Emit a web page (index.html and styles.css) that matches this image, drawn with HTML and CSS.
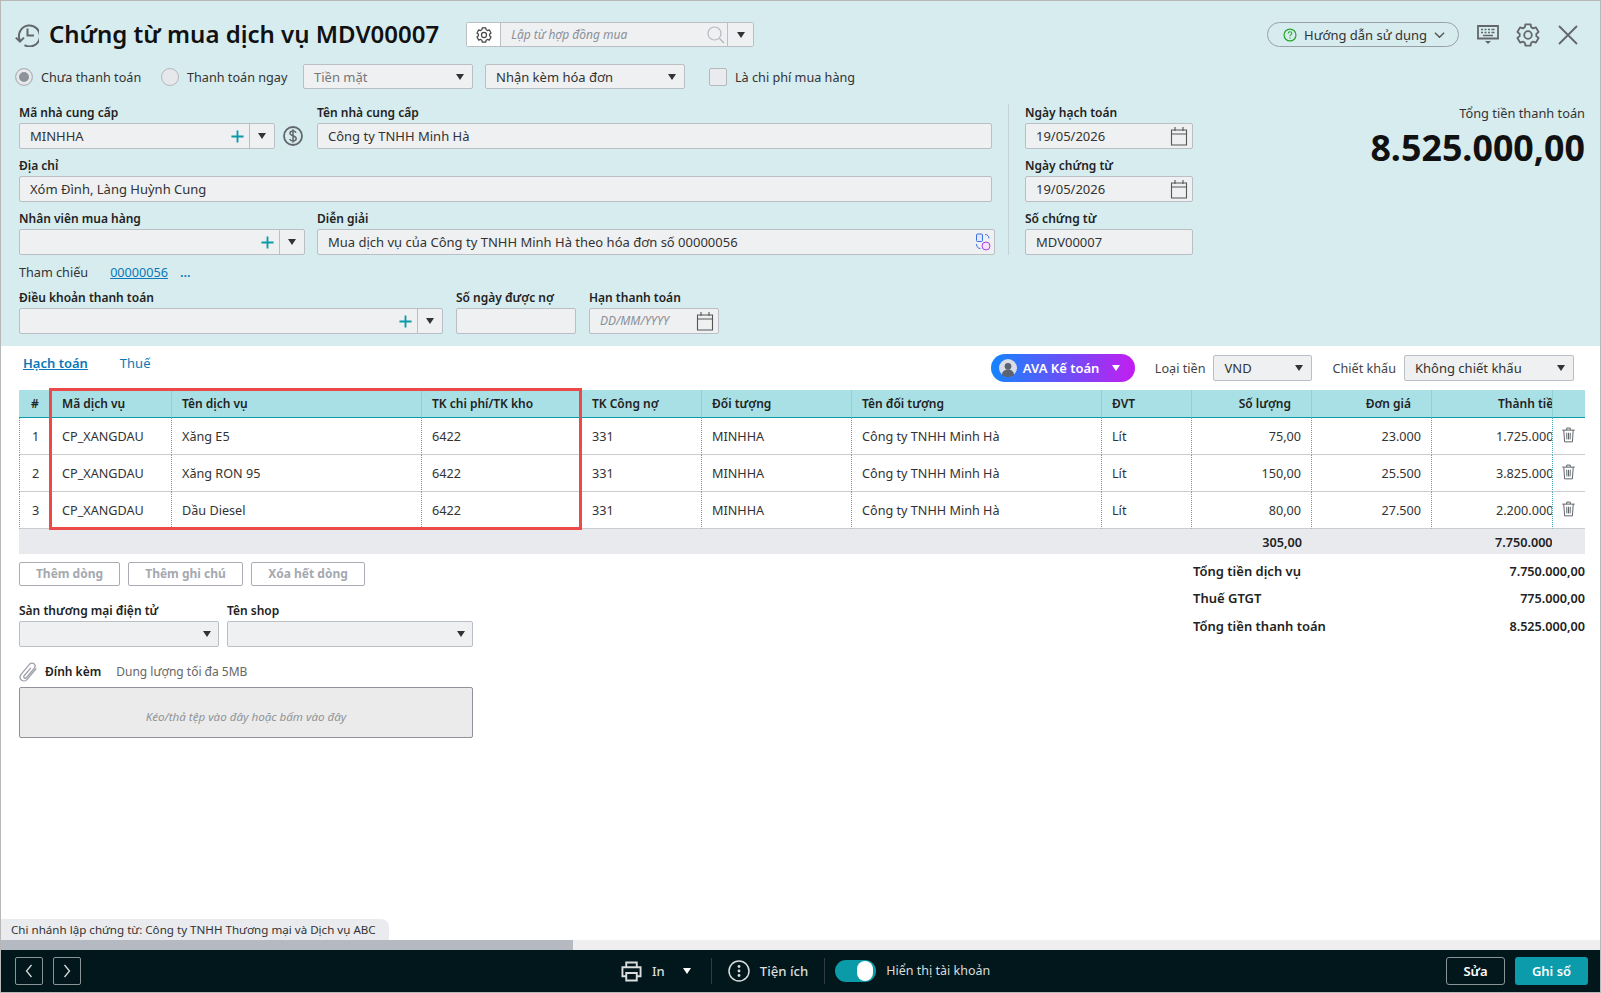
FILE: index.html
```html
<!DOCTYPE html>
<html lang="vi">
<head>
<meta charset="utf-8">
<title>Chứng từ mua dịch vụ MDV00007</title>
<link rel="stylesheet" href="styles.css">
</head>
<body>
<svg class="defs" width="0" height="0" aria-hidden="true">
  <symbol id="i-cal" viewBox="0 0 18 20"><path d="M1.5 4h15v15h-15zM1.5 8h15M5 1v4M13 1v4" fill="none" stroke="currentColor" stroke-width="1.1"/></symbol>
  <symbol id="i-plus" viewBox="0 0 14 14"><path d="M7 .5v13M.5 7h13" fill="none" stroke="currentColor" stroke-width="2"/></symbol>
  <symbol id="i-trash" viewBox="0 0 16 18"><path d="M1 3.5h14M6 3.5V1.2h4v2.3M2.7 3.5l.9 13.2h8.8l.9-13.2M6 6.5l.2 7.5M8 6.5V14M10 6.5 9.8 14" fill="none" stroke="currentColor" stroke-width="1.1"/></symbol>
  <symbol id="i-gear" viewBox="0 0 24 24"><polygon points="8.85,4.21 9.34,1.33 14.66,1.33 15.15,4.21 17.17,5.38 19.91,4.36 22.57,8.97 20.32,10.83 20.32,13.17 22.57,15.03 19.91,19.64 17.17,18.62 15.15,19.79 14.66,22.67 9.34,22.67 8.85,19.79 6.83,18.62 4.09,19.64 1.43,15.03 3.68,13.17 3.68,10.83 1.43,8.97 4.09,4.36 6.83,5.38" fill="none" stroke="currentColor" stroke-width="1.8" stroke-linejoin="round"/><circle cx="12" cy="12" r="3.8" fill="none" stroke="currentColor" stroke-width="1.8"/></symbol>
</svg>
<div class="app">
  <header class="head">
    <div class="title-row">
      <svg class="i-history" viewBox="0 0 24 24"><path d="M5 17.5A10.5 10.5 0 1 1 9.5 22.2" fill="none" stroke="currentColor" stroke-width="2"/><path d="M.8 14.6 5 18.6l4-4" fill="none" stroke="currentColor" stroke-width="2"/><path d="M12.5 5.5v7h6.5" fill="none" stroke="currentColor" stroke-width="2"/></svg>
      <h1 class="title">Chứng từ mua dịch vụ MDV00007</h1>
      <div class="combo">
        <span class="combo-gear"><svg class="i-16"><use href="#i-gear"/></svg></span>
        <span class="combo-input">Lập từ hợp đồng mua<svg class="i-search" viewBox="0 0 18 18"><circle cx="7.5" cy="7.5" r="6.5" fill="none" stroke="currentColor" stroke-width="1.2"/><path d="m12.5 12.5 4.5 4.5" stroke="currentColor" stroke-width="1.5"/></svg></span>
        <span class="combo-drop"><i class="caret"></i></span>
      </div>
      <div class="guide">
        <svg class="i-help" viewBox="0 0 16 16"><circle cx="8" cy="8" r="6.8" fill="none" stroke="currentColor" stroke-width="1.4"/><path d="M5.900 6.200C6 4.900 6.900 4.300 8 4.300c1.200 0 2.100.7 2.100 1.800 0 1.500-2.100 1.500-2.100 3.200" fill="none" stroke="currentColor" stroke-width="1.2"/><circle cx="8" cy="11.3" r=".8" fill="currentColor"/></svg>
        <span>Hướng dẫn sử dụng</span>
        <svg class="i-chev" viewBox="0 0 12 8"><path d="m1 1.5 5 5 5-5" fill="none" stroke="currentColor" stroke-width="1.5"/></svg>
      </div>
      <svg class="i-keyboard" viewBox="0 0 22 20"><path d="M1 1h20v12.5H1z" fill="none" stroke="currentColor" stroke-width="1.8"/><path d="M4 4.500h2M7.500 4.500h2M11 4.500h2M14.500 4.500h3M4 7.500h2M7.500 7.500h2M11 7.500h2M14.500 7.500h3M6 10.500h10" stroke="currentColor" stroke-width="1.3"/><path d="m8 16 3 3 3-3z" fill="currentColor"/></svg>
      <svg class="i-gear-lg"><use href="#i-gear"/></svg>
      <svg class="i-close" viewBox="0 0 20 20"><path d="m1 1 18 18M19 1 1 19" stroke="currentColor" stroke-width="1.8"/></svg>
    </div>

    <div class="options">
      <label class="radio radio-on"><i></i>Chưa thanh toán</label>
      <label class="radio"><i></i>Thanh toán ngay</label>
      <div class="box sel-cash muted">Tiền mặt<i class="caret caret-end"></i></div>
      <div class="box sel-inv">Nhận kèm hóa đơn<i class="caret caret-end"></i></div>
      <label class="check"><i></i>Là chi phí mua hàng</label>
    </div>

    <div class="form">
      <div class="form-main">
        <div class="row">
          <div class="field f-code">
            <div class="lbl">Mã nhà cung cấp</div>
            <div class="box pick">MINHHA<svg class="i-plus"><use href="#i-plus"/></svg><span class="pick-drop"><i class="caret"></i></span></div>
          </div>
          <svg class="i-dollar" viewBox="0 0 20 20"><circle cx="10" cy="10" r="9" fill="none" stroke="currentColor" stroke-width="1.8"/><path d="M13 6.800C12.500 5.600 11.300 5 10 5 8.300 5 7 5.900 7 7.300c0 3 6.200 2 6.200 5.300 0 1.500-1.400 2.400-3.200 2.400-1.500 0-2.800-.7-3.300-2M10 3.200v13.600" fill="none" stroke="currentColor" stroke-width="1.5"/></svg>
          <div class="field f-name">
            <div class="lbl">Tên nhà cung cấp</div>
            <div class="box">Công ty TNHH Minh Hà</div>
          </div>
        </div>
        <div class="field f-addr">
          <div class="lbl">Địa chỉ</div>
          <div class="box">Xóm Đình, Làng Huỳnh Cung</div>
        </div>
        <div class="row">
          <div class="field f-staff">
            <div class="lbl">Nhân viên mua hàng</div>
            <div class="box pick"><svg class="i-plus"><use href="#i-plus"/></svg><span class="pick-drop"><i class="caret"></i></span></div>
          </div>
          <div class="field f-desc">
            <div class="lbl">Diễn giải</div>
            <div class="box desc">Mua dịch vụ của Công ty TNHH Minh Hà theo hóa đơn số 00000056
              <svg class="i-ai" viewBox="0 0 16 18"><rect x="1.500" y="1" width="6" height="7.500" rx="1" fill="#dfe7fb" stroke="#3e6fe0"/><circle cx="11" cy="13" r="4" fill="#f3e4fc" stroke="#b03ce8"/><path d="M10 1.500c2.500 0 4 1.500 4 4M1.500 11c0 2.800 1.500 4.500 4 4.500" fill="none" stroke="#3e6fe0"/></svg>
            </div>
          </div>
        </div>
      </div>
      <div class="form-side">
        <div class="field">
          <div class="lbl">Ngày hạch toán</div>
          <div class="box date">19/05/2026<svg class="i-cal"><use href="#i-cal"/></svg></div>
        </div>
        <div class="field">
          <div class="lbl">Ngày chứng từ</div>
          <div class="box date">19/05/2026<svg class="i-cal"><use href="#i-cal"/></svg></div>
        </div>
        <div class="field">
          <div class="lbl">Số chứng từ</div>
          <div class="box">MDV00007</div>
        </div>
      </div>
      <div class="grand">
        <div class="grand-lbl">Tổng tiền thanh toán</div>
        <div class="grand-num">8.525.000,00</div>
      </div>
    </div>

    <div class="refs">
      <span>Tham chiếu</span>
      <a class="ref-link">00000056</a>
      <a class="ref-more">...</a>
    </div>

    <div class="row terms">
      <div class="field f-terms">
        <div class="lbl">Điều khoản thanh toán</div>
        <div class="box pick"><svg class="i-plus"><use href="#i-plus"/></svg><span class="pick-drop"><i class="caret"></i></span></div>
      </div>
      <div class="field f-days">
        <div class="lbl">Số ngày được nợ</div>
        <div class="box"></div>
      </div>
      <div class="field f-due">
        <div class="lbl">Hạn thanh toán</div>
        <div class="box date placeholder">DD/MM/YYYY<svg class="i-cal"><use href="#i-cal"/></svg></div>
      </div>
    </div>
  </header>

  <main class="body">
    <div class="toolbar">
      <a class="tab tab-on">Hạch toán</a>
      <a class="tab">Thuế</a>
      <div class="ava">
        <svg class="i-ava" viewBox="0 0 16 16"><circle cx="8" cy="8" r="8" fill="#d9dee6"/><circle cx="8" cy="6.500" r="3" fill="#5b6472"/><path d="M2.500 14c.6-3.300 2.800-4.600 5.500-4.600s4.900 1.300 5.500 4.600A8 8 0 0 1 2.500 14z" fill="#5b6472"/></svg>
        <span>AVA Kế toán</span>
        <i class="caret caret-w"></i>
      </div>
      <span class="tool-lbl">Loại tiền</span>
      <div class="box sel-cur">VND<i class="caret caret-end"></i></div>
      <span class="tool-lbl">Chiết khấu</span>
      <div class="box sel-disc">Không chiết khấu<i class="caret caret-end"></i></div>
    </div>

    <div class="grid-wrap">
      <table class="grid">
        <colgroup>
          <col class="c-no"><col class="c-code"><col class="c-name"><col class="c-acc"><col class="c-debt"><col class="c-obj"><col class="c-objn"><col class="c-unit"><col class="c-qty"><col class="c-price"><col class="c-amt"><col class="c-del">
        </colgroup>
        <thead>
          <tr>
            <th class="ctr">#</th><th>Mã dịch vụ</th><th>Tên dịch vụ</th><th>TK chi phí/TK kho</th><th>TK Công nợ</th><th>Đối tượng</th><th>Tên đối tượng</th><th>ĐVT</th><th class="num">Số lượng</th><th class="num">Đơn giá</th><th class="clip hd-amt"><span>Thành tiền</span></th><th></th>
          </tr>
        </thead>
        <tbody>
          <tr>
            <td class="ctr">1</td><td>CP_XANGDAU</td><td>Xăng E5</td><td>6422</td><td>331</td><td>MINHHA</td><td>Công ty TNHH Minh Hà</td><td>Lít</td><td class="num">75,00</td><td class="num">23.000</td><td class="clip"><span>1.725.000,00</span></td><td class="del"><svg class="i-trash"><use href="#i-trash"/></svg></td>
          </tr>
          <tr>
            <td class="ctr">2</td><td>CP_XANGDAU</td><td>Xăng RON 95</td><td>6422</td><td>331</td><td>MINHHA</td><td>Công ty TNHH Minh Hà</td><td>Lít</td><td class="num">150,00</td><td class="num">25.500</td><td class="clip"><span>3.825.000,00</span></td><td class="del"><svg class="i-trash"><use href="#i-trash"/></svg></td>
          </tr>
          <tr>
            <td class="ctr">3</td><td>CP_XANGDAU</td><td>Dầu Diesel</td><td>6422</td><td>331</td><td>MINHHA</td><td>Công ty TNHH Minh Hà</td><td>Lít</td><td class="num">80,00</td><td class="num">27.500</td><td class="clip"><span>2.200.000,00</span></td><td class="del"><svg class="i-trash"><use href="#i-trash"/></svg></td>
          </tr>
        </tbody>
        <tfoot>
          <tr>
            <td colspan="8"></td><td class="num">305,00</td><td></td><td class="clip"><span>7.750.000,00</span></td><td></td>
          </tr>
        </tfoot>
      </table>
      <div class="highlight"></div>
    </div>

    <div class="lower">
      <div class="lower-left">
        <div class="btns">
          <span class="btn">Thêm dòng</span>
          <span class="btn">Thêm ghi chú</span>
          <span class="btn">Xóa hết dòng</span>
        </div>
        <div class="row shop">
          <div class="field f-mall">
            <div class="lbl">Sàn thương mại điện tử</div>
            <div class="box"><i class="caret caret-end"></i></div>
          </div>
          <div class="field f-shop">
            <div class="lbl">Tên shop</div>
            <div class="box"><i class="caret caret-end"></i></div>
          </div>
        </div>
        <div class="attach">
          <svg class="i-clip" viewBox="1 1 15 17"><path d="M15.500 6.500 7.800 15.700c-1.400 1.600-3.600 1.700-4.900.6-1.400-1.200-1.500-3.300-.1-5l6.700-8C10.600 1.900 12.400 1.500 13.600 2.500c1.200 1 1.200 2.600.1 4l-6.400 7.700c-.6.700-1.500.8-2 .3s-.6-1.200.1-2L11 6" fill="none" stroke="currentColor" stroke-width="1.100"/></svg>
          <b>Đính kèm</b>
          <span>Dung lượng tối đa 5MB</span>
        </div>
        <div class="drop">Kéo/thả tệp vào đây hoặc bấm vào đây</div>
      </div>
      <dl class="totals">
        <div><dt>Tổng tiền dịch vụ</dt><dd>7.750.000,00</dd></div>
        <div><dt>Thuế GTGT</dt><dd>775.000,00</dd></div>
        <div><dt>Tổng tiền thanh toán</dt><dd>8.525.000,00</dd></div>
      </dl>
    </div>

    <div class="branch">Chi nhánh lập chứng từ: Công ty TNHH Thương mại và Dịch vụ ABC</div>
  </main>

  <div class="hscroll"><div class="hthumb"></div></div>

  <footer class="foot">
    <div class="nav">
      <span class="nav-btn"><svg viewBox="0 0 10 16"><path d="M7.500 2 2.500 8l5 6" fill="none" stroke="currentColor" stroke-width="1.300"/></svg></span>
      <span class="nav-btn"><svg viewBox="0 0 10 16"><path d="m2.500 2 5 6-5 6" fill="none" stroke="currentColor" stroke-width="1.300"/></svg></span>
    </div>
    <div class="foot-mid">
      <svg class="i-print" viewBox="0 0 22 22"><path d="M5.500 6V1.500h11V6M5.500 16H1.500V6.500h19V16h-4M5.500 12.500h11v8h-11z" fill="none" stroke="currentColor" stroke-width="2"/></svg>
      <span class="f-in">In</span>
      <i class="caret caret-w f-caret"></i>
      <span class="foot-sep"></span>
      <svg class="i-more" viewBox="0 0 22 22"><circle cx="11" cy="11" r="10" fill="none" stroke="currentColor" stroke-width="1.500"/><circle cx="11" cy="6.500" r="1.400" fill="currentColor"/><circle cx="11" cy="11" r="1.400" fill="currentColor"/><circle cx="11" cy="15.500" r="1.400" fill="currentColor"/></svg>
      <span class="f-util">Tiện ích</span>
      <span class="foot-sep"></span>
      <span class="toggle"><i></i></span>
      <span class="f-acc">Hiển thị tài khoản</span>
    </div>
    <div class="foot-end">
      <span class="act act-ghost">Sửa</span>
      <span class="act act-main">Ghi sổ</span>
    </div>
  </footer>
</div>
</body>
</html>
```
FILE: styles.css
```css
* { box-sizing: border-box; }
html, body { margin: 0; padding: 0; background: #fff; }
body { font: 13px/18px "Noto Sans", sans-serif; color: #212121; }
.defs { position: absolute; }
svg { display: block; flex: none; }
i { font-style: normal; }

.app { width: 1601px; height: 993px; border: 1px solid #b8b8b8; display: flex; flex-direction: column; overflow: hidden; }

/* header */
.head { flex: none; height: 345px; background: #d7ecef; padding: 21px 15px 0 18px; }
.title-row { display: flex; align-items: center; height: 25px; margin-left: -4px; }
.i-history { width: 24px; height: 24px; color: #63676d; margin-right: 10px; }
.title { margin: -2px 27px 0 0; font-size: 24px; line-height: 32px; font-weight: 600; color: #111; white-space: nowrap; }
.combo { display: flex; width: 288px; height: 25px; border: 1px solid #b9bfc5; border-radius: 2px; }
.combo-gear { width: 34px; background: #fff; display: flex; align-items: center; justify-content: center; color: #444; border-right: 1px solid #b9bfc5; }
.i-16 { width: 16px; height: 16px; }
.combo-input { flex: 1; background: #eef0f2; display: flex; align-items: center; justify-content: space-between; padding: 0 2px 0 10px; font-style: italic; font-size: 12px; color: #8a8f96; }
.i-search { width: 18px; height: 18px; color: #b5b9bf; }
.combo-drop { width: 26px; background: #eef0f2; border-left: 1px solid #b9bfc5; display: flex; align-items: center; justify-content: center; }
.caret { display: block; width: 0; height: 0; border: 4px solid transparent; border-top: 6px solid #333; border-bottom: 0; }
.caret-w { border-top-color: #fff; }
.caret-end { margin-left: auto; margin-right: -2px; }
.guide { margin-left: auto; display: flex; align-items: center; width: 192px; height: 25px; border: 1px solid #9aa0a6; border-radius: 13px; padding-left: 15px; color: #333; }
.i-help { width: 14px; height: 16px; color: #2aa52a; margin-right: 7px; }
.guide span { font-size: 13px; }
.i-chev { width: 11px; height: 8px; color: #555; margin-left: 7px; }
.i-keyboard { width: 22px; height: 20px; margin-left: 18px; color: #63676d; }
.i-gear-lg { width: 24px; height: 24px; margin-left: 17px; color: #63676d; }
.i-close { width: 20px; height: 20px; margin-left: 18px; margin-right: 7px; color: #63676d; }

.options { display: flex; align-items: center; height: 25px; margin: 17px 0 0 -4px; }
.radio, .check { display: flex; align-items: center; gap: 8px; color: #333; font-size: 12.65px; }
.radio i { width: 18px; height: 18px; border-radius: 50%; border: 1px solid #b5b8bd; background: #e6e8ec; display: block; }
.radio-on i { background: #8e929b; box-shadow: inset 0 0 0 3px #e6e8ec; }
.radio-on { width: 146px; }
.radio:not(.radio-on) { width: 142px; }
.check { margin-left: 24px; }
.check i { width: 18px; height: 18px; border: 1px solid #b5b8bd; border-radius: 2px; background: #e9ebee; display: block; }

.box { display: flex; align-items: center; height: 26px; padding: 0 10px; background: #eef0f2; border: 1px solid #b9bfc5; border-radius: 2px; color: #333; white-space: nowrap; }
.muted { color: #777; }
.sel-cash { width: 170px; height: 25px; }
.sel-inv { width: 200px; height: 25px; margin-left: 12px; }

.form { display: flex; margin-top: 15px; }
.form-main { width: 976px; display: flex; flex-direction: column; gap: 8px; }
.row { display: flex; }
.lbl { height: 19px; font-size: 12px; line-height: 18px; font-weight: 600; color: #222; white-space: nowrap; }
.f-code { width: 256px; }
.i-dollar { width: 20px; height: 20px; color: #63676d; margin: 22px 14px 0 8px; }
.f-name { width: 675px; }
.f-addr { width: 973px; }
.f-staff { width: 286px; margin-right: 12px; }
.f-desc { width: 678px; }
.pick { padding-right: 0; position: relative; }
.i-plus { width: 13px; height: 13px; color: #0a9aa8; margin-left: auto; margin-right: 5px; }
.pick-drop { width: 25px; align-self: stretch; border-left: 1px solid #b9bfc5; display: flex; align-items: center; justify-content: center; }
.desc { justify-content: space-between; padding-right: 3px; }
.i-ai { width: 16px; height: 18px; }
.form-side { width: 184px; margin-left: 13px; padding-left: 16px; border-left: 1px solid #c4d3d6; display: flex; flex-direction: column; gap: 8px; }
.form-side .box { width: 168px; }
.date { justify-content: space-between; padding-right: 4px; }
.i-cal { width: 18px; height: 20px; color: #555; }
.grand { margin-left: auto; text-align: right; }
.grand-lbl { font-size: 12.8px; line-height: 18px; color: #333; }
.grand-num { font-size: 35.8px; line-height: 50px; font-weight: 700; color: #111; }

.refs { display: flex; align-items: center; height: 18px; margin-top: 8px; color: #333; font-size: 12.65px; }
.ref-link { color: #0a78b8; text-decoration: underline; margin-left: 22px; }
.ref-more { color: #0a78b8; margin-left: 12px; font-weight: 600; }
.terms { margin-top: 8px; }
.f-terms { width: 424px; margin-right: 13px; }
.f-days { width: 120px; margin-right: 13px; }
.f-due { width: 130px; }
.placeholder { font-style: italic; font-size: 12px; color: #8a8f96; }

/* body */
.body { flex: 1; min-height: 0; background: #fff; display: flex; flex-direction: column; }
.toolbar { flex: none; display: flex; align-items: center; height: 44px; padding: 0 26px 0 22px; }
.tab { color: #0a78b8; margin-right: 32px; align-self: flex-start; margin-top: 8px; font-size: 13px; }
.tab-on { font-weight: 600; text-decoration: underline; }
.ava { margin-left: auto; display: flex; align-items: center; width: 144px; height: 28px; border-radius: 14px; padding-left: 8px; color: #fff; font-weight: 600; background: linear-gradient(90deg, #1485ff, #7a46f5 60%, #c41df0); }
.i-ava { width: 18px; height: 18px; margin-right: 6px; }
.ava .caret { margin-left: 13px; }
.tool-lbl { color: #444; margin: 0 8px 0 20px; font-size: 12.65px; }
.sel-cur { width: 99px; }
.sel-disc { width: 170px; }

.grid-wrap { flex: none; position: relative; margin: 0 15px 0 18px; }
.grid { width: 1566px; table-layout: fixed; border-collapse: separate; border-spacing: 0; font-size: 12.65px; }
.c-no { width: 32px; } .c-code { width: 120px; } .c-name { width: 250px; } .c-acc { width: 160px; } .c-debt { width: 120px; } .c-obj { width: 150px; } .c-objn { width: 250px; } .c-unit { width: 90px; } .c-qty { width: 120px; } .c-price { width: 120px; } .c-amt { width: 121px; } .c-del { width: 33px; }
.grid th { height: 28px; background: #a9e0e5; border-bottom: 1px solid #0a9aa8; border-left: 1px solid #8fd0d6; padding: 0 10px; font-size: 12px; font-weight: 600; color: #222; text-align: left; white-space: nowrap; }
.grid th:first-child { border-left: 0; }
.grid tbody td { height: 37px; border-left: 1px dotted #4fa9b5; border-bottom: 1px solid #c9ccd1; padding: 0 10px; color: #333; white-space: nowrap; }
.grid .ctr { text-align: center; padding: 0; }
.grid .num { text-align: right; }
.grid th.num { padding-right: 20px; }
.clip { overflow: hidden; }
.clip span { display: block; text-align: left; margin-left: 54px; white-space: nowrap; }
.grid .clip { padding: 0 0 0 10px; }
.hd-amt span { margin-left: 56px; }
.grid td.del { padding: 0 0 0 8px; color: #5d6167; }
.i-trash { width: 15px; height: 16px; margin-top: -3px; }
.grid tfoot td { height: 25px; background: #e8eaee; font-weight: 600; padding: 0 10px; color: #222; }
.grid tfoot .num { padding-right: 9px; }
.grid tfoot .clip { padding: 0 0 0 10px; }
.highlight { position: absolute; left: 30px; top: -2px; width: 533px; height: 142px; border: 3px solid #ec4a48; pointer-events: none; }

.lower { flex: 1; min-height: 0; display: flex; justify-content: space-between; padding: 8px 15px 0 18px; }
.lower-left { width: 454px; }
.btns { display: flex; gap: 8px; }
.btn { display: flex; align-items: center; justify-content: center; height: 24px; padding: 0 10px; border: 1px solid #a9adb3; border-radius: 2px; background: #fff; color: #a5a9af; font-size: 12px; font-weight: 700; white-space: nowrap; }
.btn:nth-child(1) { width: 101px; } .btn:nth-child(2) { width: 115px; } .btn:nth-child(3) { width: 114px; }
.shop { margin-top: 16px; }
.shop .caret-end { margin-right: -3px; }
.f-mall { width: 200px; margin-right: 8px; }
.f-shop { width: 246px; }
.attach { display: flex; align-items: center; height: 22px; margin-top: 14px; font-size: 12px; }
.i-clip { width: 18px; height: 20px; color: #9ea2a8; margin-right: 8px; }
.attach b { font-weight: 600; color: #222; margin-right: 15px; }
.attach span { color: #666; }
.drop { height: 51px; margin-top: 4px; padding-top: 8px; background: #ebebeb; border: 1px solid #8f9399; border-radius: 2px; display: flex; align-items: center; justify-content: center; font-size: 11.6px; font-style: italic; color: #8f9399; }
.totals { width: 392px; margin: -5px 0 0; }
.totals div { display: flex; justify-content: space-between; height: 27.5px; align-items: center; font-weight: 600; color: #222; }
.totals dd { margin: 0; font-size: 12.65px; }

.branch { flex: none; width: 388px; height: 21px; padding-left: 10px; background: #e9ebef; border-top-right-radius: 8px; font-size: 11.6px; line-height: 21px; color: #333; white-space: nowrap; }
.hscroll { flex: none; height: 10px; background: #efefef; }
.hthumb { width: 572px; height: 10px; background: #b5bac2; }

/* footer */
.foot { flex: none; height: 42px; background: #02171b; display: flex; align-items: center; color: #fff; padding: 0 12px 0 14px; }
.nav { display: flex; gap: 10px; }
.nav-btn { width: 28px; height: 28px; border: 1px solid #8b9396; border-radius: 2px; display: flex; align-items: center; justify-content: center; color: #d8dcdd; }
.nav-btn svg { width: 10px; height: 16px; }
.foot-mid { display: flex; align-items: center; margin-left: 540px; color: #d9dddd; }
.i-print { width: 21px; height: 21px; color: #d9dddd; }
.f-in { margin-left: 10px; font-weight: 500; }
.f-caret { margin-left: 18px; }
.foot-sep { width: 1px; height: 26px; background: #2e3c40; margin: 0 16px 0 20px; }
.i-more { width: 22px; height: 22px; color: #d9dddd; }
.f-util { margin-left: 10px; font-weight: 500; font-size: 13.2px; }
.f-util + .foot-sep { margin: 0 10px 0 16px; }
.toggle { width: 41px; height: 22px; border-radius: 11px; background: #0a9aa8; display: flex; justify-content: flex-end; align-items: center; padding-right: 3px; }
.toggle i { width: 16px; height: 20px; border-radius: 8px; background: #fff; }
.f-acc { margin-left: 10px; font-size: 12.5px; }
.foot-end { margin-left: auto; display: flex; gap: 10px; }
.act { display: flex; align-items: center; justify-content: center; height: 28px; border-radius: 3px; font-weight: 600; font-size: 13px; color: #fff; }
.act-ghost { width: 59px; border: 1px solid #8b9396; }
.act-main { width: 73px; background: #0b9bab; }
```
